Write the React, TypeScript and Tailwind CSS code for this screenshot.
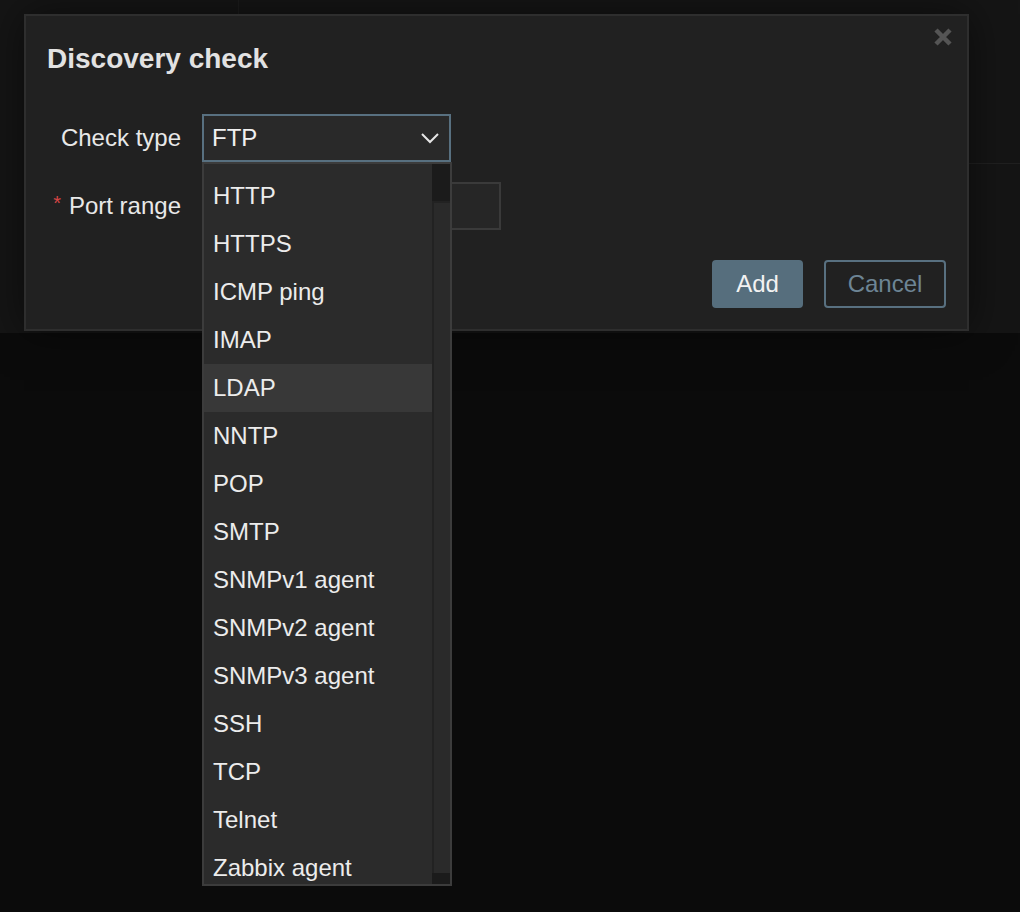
const checkTypes = [
  'HTTP',
  'HTTPS',
  'ICMP ping',
  'IMAP',
  'LDAP',
  'NNTP',
  'POP',
  'SMTP',
  'SNMPv1 agent',
  'SNMPv2 agent',
  'SNMPv3 agent',
  'SSH',
  'TCP',
  'Telnet',
  'Zabbix agent',
];

const font = { fontFamily: '"Liberation Sans", Arial, sans-serif' };

export default function App() {
  return (
    <div className="relative w-[1020px] h-[912px] overflow-hidden bg-[#0b0b0b]" style={font}>
      {/* page behind the overlay */}
      <div className="flex h-[333px] bg-[#151515]">
        <div className="w-[239px] border-r border-[#1c1c1c] pl-[80px] pt-[10px] text-[20px] text-[#666]">
          Visible
        </div>
        <div className="flex-1 flex flex-col">
          <div className="h-[164px] border-b border-[#202020]" />
        </div>
      </div>

      {/* modal */}
      <div className="absolute left-[24px] top-[14px] w-[945px] h-[317px] bg-[#212121] border-[2px] border-[#2e2e2e] shadow-[0_0_40px_rgba(0,0,0,0.5)]">
        <div className="relative px-[21px] pt-[23px]">
          <h2 className="text-[28px] font-bold text-[#e2e2e2] leading-[40px]">Discovery check</h2>
          <button className="absolute right-[13px] top-[10px] text-[#555]">
            <svg width="22" height="22" viewBox="0 0 22 22">
              <path d="M4 4 L18 18 M18 4 L4 18" stroke="currentColor" strokeWidth="4.5" strokeLinecap="butt" />
            </svg>
          </button>
        </div>

        <div className="mt-[35px] flex flex-col gap-[20px]">
          <div className="flex items-center">
            <label className="w-[155px] text-right text-[24px] text-[#e8e8e8]">Check type</label>
            <div className="ml-[21px] w-[249px] h-[48px] border-[2px] border-[#587080] bg-[#292929] flex items-center justify-between pl-[8px] pr-[8px]">
              <span className="text-[24px] text-[#f0f0f0]">FTP</span>
              <svg width="20" height="14" viewBox="0 0 20 14" className="text-[#e6e6e6] mr-[1px]">
                <path d="M2 3 L10 11 L18 3" fill="none" stroke="currentColor" strokeWidth="2" />
              </svg>
            </div>
          </div>
          <div className="flex items-center">
            <label className="w-[155px] text-right text-[24px] text-[#e8e8e8]">
              <span className="text-[#d64545] mr-[8px] text-[20px] align-top">*</span>
              Port range
            </label>
            <div className="ml-[21px] w-[299px] h-[48px] border-[2px] border-[#3a3a3a] bg-[#262626]" />
          </div>
        </div>

        <div className="absolute right-[21px] bottom-[21px] flex gap-[21px]">
          <button className="w-[91px] h-[48px] rounded-[4px] bg-[#566e7d] text-[24px] text-[#f2f2f2]">Add</button>
          <button className="w-[122px] h-[48px] rounded-[4px] border-[2px] border-[#587080] text-[24px] text-[#6d8595]">
            Cancel
          </button>
        </div>
      </div>

      {/* open select list */}
      <div className="absolute left-[202px] top-[162px] w-[250px] h-[724px] bg-[#2b2b2b] border-[2px] border-[#3c3c3c] flex">
        <ul className="flex-1 pt-[8px]">
          {checkTypes.map((t) => (
            <li
              key={t}
              className={`h-[48px] flex items-center pl-[9px] text-[24px] text-[#ececec] ${
                t === 'LDAP' ? 'bg-[#383838]' : ''
              }`}
            >
              {t}
            </li>
          ))}
        </ul>
        <div className="w-[18px] flex flex-col bg-[#222]">
          <div className="h-[37px] bg-[#1b1b1b]" />
          <div className="flex-1 border-l-[2px] border-t-[2px] border-[#222] bg-[#2a2a2a]" />
          <div className="h-[11px] bg-[#1b1b1b]" />
        </div>
      </div>
    </div>
  );
}
